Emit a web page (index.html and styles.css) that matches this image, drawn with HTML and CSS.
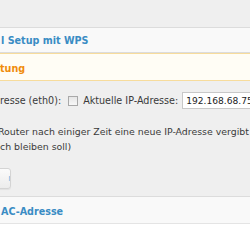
FILE: index.html
```html
<!DOCTYPE html>
<html lang="de">
<head>
<meta charset="utf-8">
<link rel="stylesheet" href="styles.css">
</head>
<body>
<div class="page">
  <div class="topbar"></div>
  <div class="section-head">l Setup mit WPS</div>
  <div class="notice">tung</div>
  <div class="form">
    <div class="row">
      <span class="label">resse (eth0):</span>
      <span class="checkbox"></span>
      <span class="label">Aktuelle IP-Adresse:</span>
      <span class="input">192.168.68.75</span>
    </div>
    <p class="hint"><span class="cut">Router nach einiger Zeit eine neue IP-Adresse vergibt</span><br>ch bleiben soll)</p>
    <div class="btn"><span>n</span></div>
  </div>
  <div class="section-head second">AC-Adresse</div>
  <div class="rest"></div>
</div>
</body>
</html>
```

FILE: styles.css
```css
html, body {
  margin: 0;
  padding: 0;
  width: 250px;
  height: 250px;
  overflow: hidden;
  background: #ffffff;
}
.page {
  font-family: "DejaVu Sans", Verdana, sans-serif;
  font-size: 9.6px;
  color: #3a3a3a;
  background: #efefef;
}
.topbar {
  height: 27px;
  background: #efefef;
  border-bottom: 1px solid #dcdcdc;
}
.section-head {
  height: 24px;
  line-height: 26px;
  background: #f9f9f9;
  border-bottom: 1px solid #dcdcdc;
  color: #3a8cc4;
  font-weight: bold;
  font-size: 9.6px;
  padding-left: 1px;
  white-space: nowrap;
  overflow: hidden;
}
.notice {
  height: 26px;
  line-height: 30px;
  background: #fffdf5;
  border-top: 1px solid #f7dc9c;
  border-bottom: 1px solid #f7dc9c;
  color: #f08c0c;
  font-weight: bold;
  font-size: 9.6px;
  white-space: nowrap;
}
.form {
  padding-top: 11px;
  height: 104px;
  border-bottom: 1px solid #dcdcdc;
}
.row {
  display: flex;
  align-items: center;
  height: 17px;
  white-space: nowrap;
  overflow: hidden;
}
.checkbox {
  width: 8px;
  height: 8px;
  border: 1px solid #a9a9a9;
  background: linear-gradient(#e6e6e6, #f8f8f8);
  margin: 0 5px 0 7px;
  flex: none;
}
.input {
  margin-left: 4px;
  height: 15px;
  line-height: 16px;
  padding-left: 3px;
  border: 1px solid #c8c8c8;
  background: #ffffff;
  color: #222222;
  font-size: 9.1px;
  flex: none;
  width: 100px;
}
.hint {
  margin: 15px 0 0 0;
  line-height: 15px;
  white-space: nowrap;
  overflow: hidden;
  font-size: 9.4px;
}
.cut {
  margin-left: -2px;
}
.btn {
  margin-top: 14px;
  margin-left: -20px;
  width: 29px;
  height: 19px;
  border: 1px solid #d4d4d4;
  border-radius: 3px;
  background: linear-gradient(#fbfbfb, #ececec);
  box-shadow: 0 1px 1px rgba(0,0,0,0.06);
  text-align: right;
  color: #7fb7e0;
  font-size: 9px;
  line-height: 19px;
  overflow: hidden;
}
.btn span {
  margin-right: -4px;
}
.second {
  height: 26px;
  line-height: 29px;
  background: #f9f9f9;
  border-bottom: 1px solid #e4e4e4;
}
.rest {
  height: 40px;
  background: #ffffff;
}
```
